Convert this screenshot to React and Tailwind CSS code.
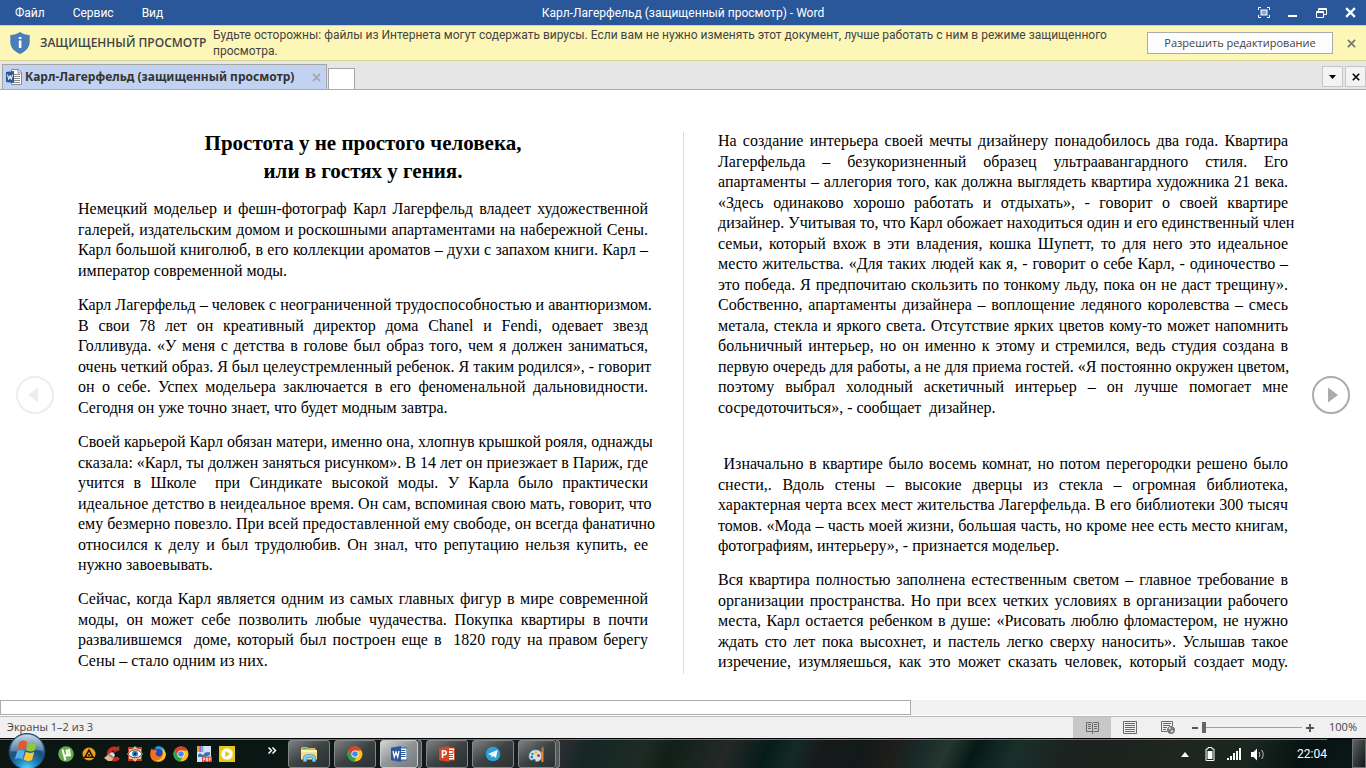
import clsx from 'clsx';

const leftColumn = [
  [
    'Немецкий модельер и фешн-фотограф Карл Лагерфельд владеет художественной',
    'галерей, издательским домом и роскошными апартаментами на набережной Сены.',
    'Карл большой книголюб, в его коллекции ароматов – духи с запахом книги. Карл –',
    'император современной моды.'
  ],
  [
    'Карл Лагерфельд – человек с неограниченной трудоспособностью и авантюризмом.',
    'В свои 78 лет он креативный директор дома Chanel и Fendi, одевает звезд',
    'Голливуда. «У меня с детства в голове был образ того, чем я должен заниматься,',
    'очень четкий образ. Я был целеустремленный ребенок. Я таким родился», - говорит',
    'он о себе. Успех модельера заключается в его феноменальной дальновидности.',
    'Сегодня он уже точно знает, что будет модным завтра.'
  ],
  [
    'Своей карьерой Карл обязан матери, именно она, хлопнув крышкой рояля, однажды',
    'сказала: «Карл, ты должен заняться рисунком». В 14 лет он приезжает в Париж, где',
    'учится в Школе \u00a0при Синдикате высокой моды. У Карла было практически',
    'идеальное детство в неидеальное время. Он сам, вспоминая свою мать, говорит, что',
    'ему безмерно повезло. При всей предоставленной ему свободе, он всегда фанатично',
    'относился к делу и был трудолюбив. Он знал, что репутацию нельзя купить, ее',
    'нужно завоевывать.'
  ],
  [
    'Сейчас, когда Карл является одним из самых главных фигур в мире современной',
    'моды, он может себе позволить любые чудачества. Покупка квартиры в почти',
    'развалившемся \u00a0доме, который был построен еще в \u00a01820 году на правом берегу',
    'Сены – стало одним из них.'
  ]
];

const rightColumn = [
  [
    'На создание интерьера своей мечты дизайнеру понадобилось два года. Квартира',
    'Лагерфельда – безукоризненный образец ультраавангардного стиля. Его',
    'апартаменты – аллегория того, как должна выглядеть квартира художника 21 века.',
    '«Здесь одинаково хорошо работать и отдыхать», - говорит о своей квартире',
    'дизайнер. Учитывая то, что Карл обожает находиться один и его единственный член',
    'семьи, который вхож в эти владения, кошка Шупетт, то для него это идеальное',
    'место жительства. «Для таких людей как я, - говорит о себе Карл, - одиночество –',
    'это победа. Я предпочитаю скользить по тонкому льду, пока он не даст трещину».',
    'Собственно, апартаменты дизайнера – воплощение ледяного королевства – смесь',
    'метала, стекла и яркого света. Отсутствие ярких цветов кому-то может напомнить',
    'больничный интерьер, но он именно к этому и стремился, ведь студия создана в',
    'первую очередь для работы, а не для приема гостей. «Я постоянно окружен цветом,',
    'поэтому выбрал холодный аскетичный интерьер – он лучше помогает мне',
    'сосредоточиться», - сообщает \u00a0дизайнер.'
  ],
  [
    '\u00a0Изначально в квартире было восемь комнат, но потом перегородки решено было',
    'снести,. Вдоль стены – высокие дверцы из стекла – огромная библиотека,',
    'характерная черта всех мест жительства Лагерфельда. В его библиотеки 300 тысяч',
    'томов. «Мода – часть моей жизни, большая часть, но кроме нее есть место книгам,',
    'фотографиям, интерьеру», - признается модельер.'
  ],
  [
    'Вся квартира полностью заполнена естественным светом – главное требование в',
    'организации пространства. Но при всех четких условиях в организации рабочего',
    'места, Карл остается ребенком в душе: «Рисовать люблю фломастером, не нужно',
    'ждать сто лет пока высохнет, и пастель легко сверху наносить». Услышав такое',
    'изречение, изумляешься, как это может сказать человек, который создает моду.'
  ]
];

const Paragraph = ({ lines, continues, className }) => (
  <p className={className}>
    {lines.map((line, i) => (
      <span
        key={line}
        className={clsx(
          'block whitespace-nowrap odd:leading-[20px] even:leading-[21px]',
          (continues || i < lines.length - 1) &&
            'text-justify [text-align-last:justify]'
        )}
      >
        {line}{' '}
      </span>
    ))}
  </p>
);

const Cross = ({ size, width = 2 }) => (
  <svg width={size} height={size} viewBox="0 0 10 10" stroke="currentColor" strokeWidth={width} fill="none">
    <path d="M1 1l8 8M9 1L1 9" />
  </svg>
);

const TitleBar = () => (
  <header className="grid h-[25px] shrink-0 grid-cols-[1fr_auto_1fr] items-center bg-[#2a579a] text-xs text-white">
    <nav className="flex gap-7 pl-[15px]">
      <button>Файл</button>
      <button>Сервис</button>
      <button>Вид</button>
    </nav>
    <h1>Карл-Лагерфельд (защищенный просмотр) - Word</h1>
    <div className="flex items-center justify-end gap-[18px] pr-[10px]">
      <button aria-label="Во весь экран">
        <svg width="12" height="11" viewBox="0 0 12 11" fill="none" stroke="#fff">
          <path d="M.5 3V.5H3M9 .5h2.5V3M11.5 8v2.500H9M3 10.500H.5V8" />
          <rect x="3" y="3" width="6" height="5" fill="#8fa9d0" />
        </svg>
      </button>
      <button aria-label="Свернуть">
        <svg width="10" height="11" viewBox="0 0 10 11">
          <path d="M0 8h9v2H0z" fill="#fff" />
        </svg>
      </button>
      <button aria-label="Восстановить">
        <svg width="11" height="10" viewBox="0 0 11 10" fill="none" stroke="#fff">
          <path d="M2.500 3V.5h8v6H8M2.500 1.500h8" />
          <path d="M.5 3.500h7v6h-7zM.5 4.500h7" />
        </svg>
      </button>
      <button aria-label="Закрыть">
        <Cross size={11} />
      </button>
    </div>
  </header>
);

const ProtectedViewBar = () => (
  <section className="flex h-9 shrink-0 items-center border-y border-[#d9d492] bg-[#fcf7b6] pr-[10px] text-[#444]">
    <svg className="ml-[10px] shrink-0" width="20" height="22" viewBox="0 0 20 22">
      <path
        d="M10 0c3 2 6 2.800 9.700 3v7c0 5.500-4 9.500-9.700 12C4.300 19.500.3 15.500.3 10V3C4 2.800 7 2 10 0z"
        fill="#4a7ebb"
      />
      <path d="M8.800 5h2.600v2H8.800zM8.800 8.500h2.600V16H8.800z" fill="#fff" />
    </svg>
    <strong className="ml-[10px] w-[173px] shrink-0 whitespace-nowrap font-['Open_Sans'] text-xs font-semibold">
      ЗАЩИЩЕННЫЙ ПРОСМОТР
    </strong>
    <p className="flex-1 text-xs leading-4">
      Будьте осторожны: файлы из Интернета могут содержать вирусы. Если вам не
      нужно изменять этот документ, лучше работать с ним в режиме защищенного
      <br />
      просмотра.
    </p>
    <button className="h-[22px] w-[186px] shrink-0 border border-[#ababab] bg-[#fdfdfd] font-['Open_Sans'] text-[11px]">
      Разрешить редактирование
    </button>
    <button className="ml-[14px] text-[#777]" aria-label="Закрыть панель">
      <Cross size={9} />
    </button>
  </section>
);

const TabStrip = () => (
  <div className="flex h-[29px] shrink-0 items-end border-b border-[#ababab] bg-[#e6e6e6]">
    <div className="ml-[2px] flex h-[25px] w-[325px] items-center border border-b-0 border-[#a5a5a5] bg-[#c2d3f2] pl-[3px] text-[#333]">
      <svg className="shrink-0" width="16" height="16" viewBox="0 0 16 16">
        <path d="M5.500.5h7l3 3v12h-10z" fill="#fff" stroke="#8a8a8a" />
        <path d="M12 1v3h3M8 5.500h6M8 7.500h6M8 9.500h6M8 11.500h6M8 13.500h6" stroke="#8a8a8a" fill="none" />
        <path d="M0 3l8-1v12l-8-1z" fill="#2a579a" />
        <path d="M1.500 5.500l1.200 5L4 6.500l1.300 4 1.200-5" stroke="#fff" fill="none" />
      </svg>
      <span className="ml-[3px] flex-1 whitespace-nowrap font-['Noto_Sans'] text-xs font-bold">
        Карл-Лагерфельд (защищенный просмотр)
      </span>
      <button className="mr-[5px] text-[#a0a5b0]" aria-label="Закрыть вкладку">
        <Cross size={9} />
      </button>
    </div>
    <button
      className="ml-px h-[21px] w-[27px] border border-b-0 border-[#a5a5a5] bg-white"
      aria-label="Новая вкладка"
    />
    <div className="mb-[2px] ml-auto flex gap-[2px]">
      <button className="flex size-[21px] items-center justify-center border border-[#c6c6c6] bg-[#f3f3f3]" aria-label="Список вкладок">
        <svg width="7" height="4" viewBox="0 0 7 4">
          <path d="M0 0h7L3.500 4z" />
        </svg>
      </button>
      <button className="flex size-[21px] items-center justify-center border border-[#c6c6c6] bg-[#f3f3f3] text-black" aria-label="Закрыть">
        <Cross size={8} />
      </button>
    </div>
  </div>
);

const PageButton = ({ flip, label }) => (
  <button
    className={clsx('flex w-[38px] shrink-0 items-center self-center', flip ? 'rotate-180 text-[#ededed]' : 'text-[#ababab]')}
    aria-label={label}
  >
    <svg width="38" height="38" viewBox="0 0 38 38">
      <circle cx="19" cy="19" r="18" fill="none" stroke="currentColor" strokeWidth="2" />
      <path d="M16 11.500v15l10-7.500z" fill="currentColor" />
    </svg>
  </button>
);

const Document = () => (
  <main className="flex flex-1 bg-white px-4">
    <PageButton flip label="Предыдущий экран" />
    <article className="mx-6 flex min-w-0 flex-1 pt-[39px] pb-[26px] font-['Liberation_Serif',serif] text-[16px] text-black">
      <div className="min-w-0 flex-1">
        <h2 className="mb-[14px] text-center text-[21px] leading-7 font-bold">
          Простота у не простого человека,
          <br />
          или в гостях у гения.
        </h2>
        <div className="flex flex-col gap-[14px]">
          {leftColumn.map((lines) => (
            <Paragraph key={lines[0]} lines={lines} />
          ))}
        </div>
      </div>
      <div className="mt-[3px] mr-[34px] ml-[35px] w-px bg-[#dcdcdc]" />
      <div className="min-w-0 flex-1 pt-[2px]">
        <Paragraph lines={rightColumn[0]} />
        <Paragraph className="mt-9" lines={rightColumn[1]} />
        <Paragraph className="mt-[14px]" lines={rightColumn[2]} continues />
      </div>
    </article>
    <PageButton label="Следующий экран" />
  </main>
);

const StatusBar = () => (
  <footer className="flex h-[22px] shrink-0 items-center border-t border-[#b8bcba] bg-[#f0f0f0] pr-[9px] font-['Open_Sans'] text-[11px] text-[#444]">
    <span className="pl-[7px]">Экраны 1–2 из 3</span>
    <div className="ml-auto flex self-stretch">
      <button className="flex w-[38px] items-center justify-center bg-[#c8c8c8]" aria-label="Режим чтения">
        <svg width="13" height="13" viewBox="0 0 13 13" fill="none" stroke="#6a6a6a">
          <path d="M.5 1.500h5l1 1 1-1h5v9h-5l-1 1-1-1h-5zM6.500 2v11M2 3.500h3M2 5.500h3M2 7.500h3M8 3.500h3M8 5.500h3M8 7.500h3" />
        </svg>
      </button>
      <button className="flex w-[38px] items-center justify-center" aria-label="Разметка страницы">
        <svg width="14" height="13" viewBox="0 0 14 13" fill="none" stroke="#6a6a6a">
          <path d="M.5.5h13v12H.5zM2 2.500h10M2 4.500h10M2 6.500h10M2 8.500h10M2 10.500h10" />
        </svg>
      </button>
      <button className="flex w-[38px] items-center justify-center" aria-label="Веб-документ">
        <svg width="14" height="13" viewBox="0 0 14 13" fill="none" stroke="#6a6a6a">
          <path d="M6 10.500H.5V.5h11V5M2 2.500h8M2 4.500h7M2 6.500h4M2 8.500h3" />
          <circle cx="10" cy="9" r="3.500" fill="#7d7d7d" />
          <path d="M8 8l1.500-1.500M10 11l2-1.500" stroke="#f0f0f0" strokeWidth="1.500" />
        </svg>
      </button>
    </div>
    <button className="ml-[5px] h-[2px] w-[6px] bg-[#555]" aria-label="Уменьшить" />
    <div className="relative mx-1 h-[11px] w-[100px]">
      <div className="mt-[5px] h-px bg-[#a0a0a0]" />
      <div className="absolute top-0 left-0 h-[11px] w-1 bg-[#666]" />
    </div>
    <button aria-label="Увеличить">
      <svg width="8" height="8" viewBox="0 0 8 8">
        <path d="M3 0h2v3h3v2H5v3H3V5H0V3h3z" fill="#555" />
      </svg>
    </button>
    <span className="ml-[15px]">100%</span>
  </footer>
);

const Chrome = ({ size = 16 }) => (
  <svg width={size} height={size} viewBox="0 0 16 16">
    <circle cx="8" cy="8" r="7.500" fill="#fbc116" />
    <path d="M1.500 4.200A7.500 7.500 0 0 1 14.600 4.500H8A3.500 3.500 0 0 0 4.900 9.700z" fill="#e33b2e" />
    <path d="M1.500 4.200L4.900 9.700A3.500 3.500 0 0 0 9.500 11.200L7 15.500A7.500 7.500 0 0 1 1.500 4.200z" fill="#2ba24c" />
    <circle cx="8" cy="8" r="3.500" fill="#fff" />
    <circle cx="8" cy="8" r="2.800" fill="#4285f4" />
  </svg>
);

const UTorrent = () => (
  <svg width="16" height="16" viewBox="0 0 16 16">
    <circle cx="8" cy="8" r="7.800" fill="#65ad4b" />
    <path d="M4.500 3.500l1.300 5c.5 1.800 3.500 1.500 3.500-.5L8.500 3.500M9.300 8c.3 1.600 1.500 2 2.700 1.200L10.800 3M6 9l1.500 5.500" stroke="#fff" strokeWidth="2" fill="none" />
  </svg>
);

const Aimp = () => (
  <svg width="16" height="16" viewBox="0 0 16 16">
    <circle cx="8" cy="8" r="6.500" fill="#f0a01c" />
    <path d="M8 4.200l4 7H4z" fill="none" stroke="#1c1408" strokeWidth="1.600" />
    <path d="M7.300 8h1.400v2H7.300z" fill="#1c1408" />
  </svg>
);

const CCleaner = () => (
  <svg width="16" height="16" viewBox="0 0 16 16">
    <path d="M14.500 4.500A5.500 5.500 0 1 0 14.500 11.500" stroke="#cc2a1c" strokeWidth="4" fill="none" />
    <path d="M15 .5L9 7.500" stroke="#88442c" strokeWidth="1.800" />
    <path d="M8 6l3 2.500-1 3-5-3.500z" fill="#d8dbe0" />
    <path d="M5 8l5 3.500L7.500 15H4L0 12z" fill="#e9b888" />
    <path d="M4.500 8.500l5 3.500" stroke="#3f8dd0" strokeWidth="1.500" />
  </svg>
);

const ImageViewer = () => (
  <svg width="16" height="16" viewBox="0 0 16 16">
    <path d="M1 1h14v14H1z" fill="#c63a22" />
    <path d="M8 0l2.500 3H14v3l2 2-2 2v3h-3.500L8 16l-2.500-3H2v-3L0 8l2-2V3h3.500z" fill="#eabf94" />
    <path d="M1 8c3.500-5.500 10.500-5.500 14 0-3.500 5-10.500 5-14 0z" fill="#fff" stroke="#4a3028" strokeWidth=".8" />
    <circle cx="8" cy="7.800" r="3" fill="#2f80cf" />
    <circle cx="8" cy="7.800" r="1.400" fill="#102038" />
  </svg>
);

const Firefox = () => (
  <svg width="16" height="16" viewBox="0 0 16 16">
    <circle cx="8.500" cy="7.500" r="7" fill="#2748a8" />
    <path d="M6 2a7 7 0 0 1 8 3" stroke="#2f9bdc" strokeWidth="2.500" fill="none" />
    <path d="M1.500 2.500l1.800 1.800C5 3.500 6.500 4 7 5.500L5.500 7c0 3 3 4.500 5.500 3 2-1.500 2-4.500 1-7 3 1.800 4 4 3.600 7C14.500 18 1 18.500.2 9c0-2.500.5-4.500 1.300-6.500z" fill="#f5701d" />
    <path d="M12 2.500c3.500 2 4.500 5.500 3 8.800-2 4-7 4.700-9.500 3.200 5 .5 9.500-4 6.500-12z" fill="#ffc91f" />
  </svg>
);

const PdfEditor = () => (
  <svg width="16" height="16" viewBox="0 0 16 16">
    <path d="M1 0h14v16H1z" fill="#d4e4f4" />
    <path d="M1 0h2.300v6H1z" fill="#e2a33c" />
    <path d="M3.300 0h2v6h-2z" fill="#a45fc0" />
    <path d="M5.300 0h2v6h-2z" fill="#67a9e0" />
    <path d="M2 9c3-4 4 2 6-1s3-1 6-2v3c-4 2-8 2-12 2z" fill="#2e78bf" />
    <path d="M6 10.500h10V16H6z" fill="#e5402e" />
    <path d="M7.500 15v-3h1.500v1.500H7.500M10.500 12v3h1.200v-3zM13.500 15v-3h1.700M13.500 13.500h1.200" stroke="#fff" strokeWidth=".7" fill="none" />
  </svg>
);

const PotPlayer = () => (
  <svg width="16" height="16" viewBox="0 0 16 16">
    <path d="M0 0h16v16H0z" fill="#e9c814" />
    <circle cx="8" cy="8" r="5.800" fill="#fff" stroke="#f5e27a" />
    <path d="M6.200 4.800v6.400L11.200 8z" fill="#e9c814" />
  </svg>
);

const Explorer = () => (
  <svg width="18" height="16" viewBox="0 0 18 16">
    <path d="M1 2.500l1-1.500h5l1 1h7.500v3H1z" fill="#d9b654" />
    <path d="M3 2h4v1H3z" fill="#45b04c" />
    <path d="M1 4h16v9.500H1z" fill="#f5df8e" />
    <path d="M1 4h16v2H1z" fill="#fcf0b8" />
    <path d="M3.500 15.500V11c0-3.500 12-3.500 12 0v4.500h-3v-4h-6v4z" fill="#86cdf0" stroke="#4c9cc8" strokeWidth=".8" />
  </svg>
);

const Word = () => (
  <svg width="16" height="16" viewBox="0 0 16 16">
    <path d="M8 2h8v12H8z" fill="#fff" stroke="#2a579a" />
    <path d="M9.500 4.500h5M9.500 6.500h5M9.500 8.500h5M9.500 10.500h5" stroke="#2a579a" />
    <path d="M0 1.800L10 0v16L0 14.200z" fill="#2a579a" />
    <path d="M2 5l1.300 6L5 6l1.700 5L8 5" stroke="#fff" strokeWidth="1.300" fill="none" />
  </svg>
);

const PowerPoint = () => (
  <svg width="16" height="16" viewBox="0 0 16 16">
    <path d="M8 2h7.500v12H8z" fill="#fff" stroke="#d24625" />
    <path d="M10 4.500h4v3h-4M10 9.500h4M10 11.500h4" stroke="#d24625" fill="none" />
    <path d="M0 1.800L10 0v16L0 14.200z" fill="#d24625" />
    <path d="M3.500 12V4.800H5c3 0 3 4 0 4H3.500" stroke="#fff" strokeWidth="1.600" fill="none" />
  </svg>
);

const Telegram = () => (
  <svg width="16" height="16" viewBox="0 0 16 16">
    <circle cx="8" cy="8" r="7.300" fill="#2ca0d8" />
    <path d="M3 8l9.500-4L11 12 8 10l-1.500 1.500L6.200 9.300z" fill="#fff" />
    <path d="M6.200 9.300L10.500 6" stroke="#a9d3ea" strokeWidth=".8" />
  </svg>
);

const Paint = () => (
  <svg width="18" height="17" viewBox="0 0 18 17">
    <path d="M7.500 4C3 4 1 7.500 1 10.500S3.500 15 5 13.500s3 .5 2.500 1.500 6 1 6-4.500S11 4 7.500 4z" fill="#cfe3f1" stroke="#86aecb" strokeWidth=".6" />
    <circle cx="4.500" cy="8" r="1.300" fill="#39a845" />
    <circle cx="8" cy="6.500" r="1.300" fill="#e8b823" />
    <circle cx="3.800" cy="11" r="1.300" fill="#2d6fc9" />
    <circle cx="10.500" cy="9.500" r="1.500" fill="#d5362a" />
    <path d="M13 6h2.500v10h-2.200z" fill="#e6862a" />
    <path d="M12.500 6L13 2.500 15 0l1.200 3L15.800 6z" fill="#a86c3a" />
  </svg>
);

const StartOrb = () => (
  <svg width="38" height="36" viewBox="0 0 38 36">
    <defs>
      <radialGradient id="orb" cx=".5" cy="1" r=".95">
        <stop offset="0" stopColor="#5fdcff" />
        <stop offset=".3" stopColor="#2286c0" />
        <stop offset=".6" stopColor="#1a4f7c" />
        <stop offset="1" stopColor="#5d87a5" />
      </radialGradient>
      <linearGradient id="gloss" x1="0" y1="0" x2="0" y2="1">
        <stop offset="0" stopColor="#e1eef5" stopOpacity=".8" />
        <stop offset="1" stopColor="#a7c5d8" stopOpacity=".35" />
      </linearGradient>
    </defs>
    <circle cx="19" cy="18.500" r="18" fill="url(#orb)" stroke="#14425f" />
    <path d="M2.500 18a16.500 16.500 0 0 1 33 0c-10-3-22 2-33 0z" fill="url(#gloss)" />
    <path d="M11.500 8.500c3-1.500 5-1.300 7.500.2l-2 8c-2.500-1.400-5-1.400-7.500-.2z" fill="#e8562a" />
    <path d="M20.200 9.300c3 1.500 5.500 1.500 8.500.2l-2.200 8c-2.800 1.300-5.500 1.200-8.300-.2z" fill="#94c53d" />
    <path d="M9.200 18c2.500-1.200 5-1.200 7.500.2l-2.200 8.300c-2.500-1.500-4.800-1.500-7.500-.3z" fill="#54b1ea" />
    <path d="M17.800 18.800c2.800 1.400 5.500 1.400 8.400.2L24 27c-2.800 1.300-5.500 1.200-8.400-.2z" fill="#fdc82f" />
  </svg>
);

const pinned = [
  ['uTorrent', UTorrent],
  ['AIMP', Aimp],
  ['CCleaner', CCleaner],
  ['Просмотр изображений', ImageViewer],
  ['Firefox', Firefox],
  ['Chrome', Chrome],
  ['PDF', PdfEditor],
  ['PotPlayer', PotPlayer]
];

const running = [
  { name: 'Проводник', Icon: Explorer },
  { name: 'Google Chrome', Icon: Chrome },
  { name: 'Word', Icon: Word, active: true, stack: true },
  { name: 'PowerPoint', Icon: PowerPoint },
  { name: 'Telegram', Icon: Telegram },
  { name: 'Paint', Icon: Paint, stack: true }
];

const TaskButton = ({ name, Icon, active, stack }) => (
  <div className="flex w-[46px]">
    <button
      aria-label={name}
      className={clsx(
        'flex h-7 items-center justify-center rounded-[3px] border',
        stack ? 'w-[38px]' : 'w-[42px]',
        active
          ? 'border-[#c8cacb] bg-linear-to-br from-[#d5d7d8] via-[#909496] to-[#75797b]'
          : 'border-[#838788] bg-linear-to-br from-[#7e8282] via-[#3c4141] to-[#2b3030]'
      )}
    >
      <Icon />
    </button>
    {stack && (
      <div className="h-7 w-[4px] rounded-r-[3px] border-y border-r border-[#838788] bg-[#555a5b]" />
    )}
  </div>
);

const Taskbar = () => (
  <div className="flex h-[30px] shrink-0 border-t border-black bg-[linear-gradient(115deg,#0c1512_0%,#0a1613_20%,#191c1f_38%,#2c2d33_41%,#152624_43%,#1c2b24_47%,#101f18_49%,#242827_53%,#061c18_56%,#152a26_58%,#16191a_60%,#121a19_63%,#1f1c1a_65%,#182a28_67%,#26372f_69%,#061916_71%,#1a2f2a_74%,#1b211f_78%,#1e261e_86%,#1a261f_91%,#061210_95%,#0a1a1a_100%)] text-white">
    <div className="flex flex-1 items-center border-t border-[#6f7776]">
      <button className="-mt-[7px] ml-2 h-9 w-[38px] self-start" aria-label="Пуск">
        <StartOrb />
      </button>
      <div className="ml-3 flex gap-[7px]">
        {pinned.map(([name, Icon]) => (
          <button key={name} aria-label={name}>
            <Icon />
          </button>
        ))}
      </div>
      <button className="mb-2 ml-[33px]" aria-label="Показать скрытые">
        <svg width="9" height="7" viewBox="0 0 9 7" fill="none" stroke="#fff" strokeWidth="1.500">
          <path d="M.5.500l3 3-3 3M4.500.500l3 3-3 3" />
        </svg>
      </button>
      <div className="ml-[11px] flex">
        {running.map((app) => (
          <TaskButton key={app.name} {...app} />
        ))}
      </div>
      <div className="ml-auto flex items-center">
        <svg width="8" height="5" viewBox="0 0 8 5">
          <path d="M4 0l4 5H0z" fill="#fff" />
        </svg>
        <svg className="ml-4" width="10" height="14" viewBox="0 0 10 14">
          <path d="M3 .5h4V2h2v11.500H1V2h2z" fill="none" stroke="#fff" />
          <path d="M2.500 4h5v8h-5z" fill="#fff" />
        </svg>
        <svg className="ml-3" width="15" height="12" viewBox="0 0 15 12" fill="#fff">
          <path d="M0 10h2v2H0zM3 8h2v4H3zM6 5h2v7H6zM9 3h2v9H9zM12 0h2v12h-2z" />
        </svg>
        <svg className="ml-[9px]" width="14" height="13" viewBox="0 0 14 13">
          <path d="M0 4h2.500L6 .500v12L2.500 9H0z" fill="#fff" />
          <path d="M8 4c1.200 1.500 1.200 3.500 0 5M10.500 2c2.300 2.800 2.300 6.200 0 9" fill="none" stroke="#c8cccb" />
        </svg>
        <time className="ml-8 text-xs">22:04</time>
      </div>
    </div>
    <button
      className="ml-[25px] w-[14px] border border-[#6d7473] bg-linear-to-br from-[#5d6463] to-[#101918]"
      aria-label="Свернуть все окна"
    />
  </div>
);

const App = () => (
  <div className="flex min-h-screen flex-col bg-white font-['Roboto','Open_Sans',sans-serif]">
    <TitleBar />
    <ProtectedViewBar />
    <TabStrip />
    <Document />
    <div className="h-4 shrink-0 border-b border-white bg-[#f2f2f2]">
      <div className="h-[15px] w-2/3 border border-[#ababab] bg-white" />
    </div>
    <StatusBar />
    <Taskbar />
  </div>
);

export default App;
